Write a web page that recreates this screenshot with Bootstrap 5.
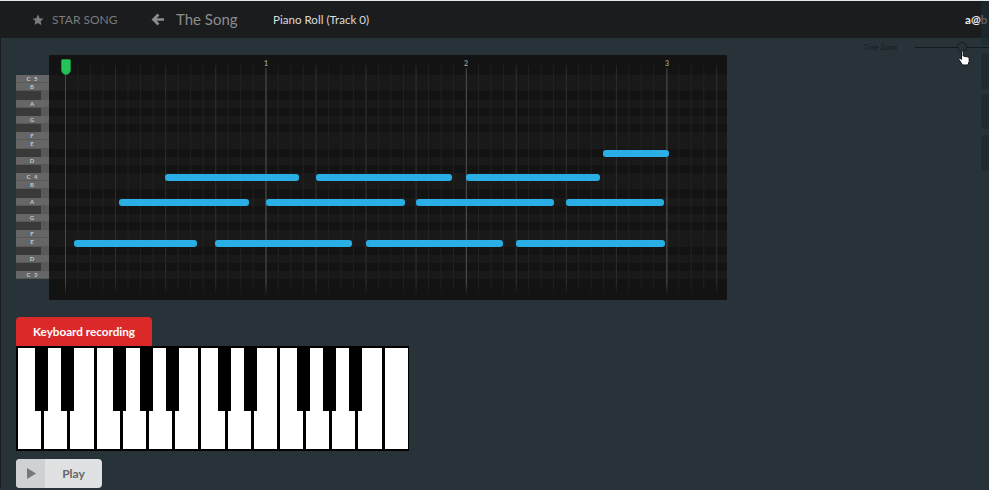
<!DOCTYPE html>
<html lang="en">
<head>
  <meta charset="UTF-8">
  <title>Piano Roll</title>
  <link href="https://cdn.jsdelivr.net/npm/bootstrap@5.3.0/dist/css/bootstrap.min.css" rel="stylesheet">
  <style>
    html, body { height: 100%; }
    body {
      background-color: #273339;
      font-family: Lato, "Open Sans", sans-serif;
      overflow: hidden;
      position: relative;
      border-top: 1px solid #e4e8e8;
    }
    .song-nav {
      background-color: #1b1c1d;
      height: 37px;
      padding: 0 0 0 32px;
      flex-wrap: nowrap;
      justify-content: flex-start;
    }
    .star-link { color: #7a7b7c; font-size: 12px; width: 119px; }
    .star-link svg { margin-right: 8px; }
    .song-link { color: #8c8d8e; font-size: 15px; width: 122px; }
    .song-link svg { margin-right: 12px; }
    .track-name { color: #dcdcdc; font-size: 11.6px; }
    .user-name { color: #e8e8e8; font-size: 11.6px; font-weight: 700; position: absolute; left: 965px; }
    .work-area { padding: 0 0 0 15px; border-left: 1px solid #1b1c1d; }
    .roll-row { height: 279px; }
    .key-col { width: 33px; padding-top: 37px; flex: none; }
    .key-row {
      height: 8.18px;
      background-color: #666;
      color: #c8c8c8;
      font-size: 6px;
      font-weight: 700;
      line-height: 8px;
      text-align: center;
      letter-spacing: 1px;
      position: relative;
      box-shadow: inset 0 -1px 0 #585858;
    }
    .key-row.is-black { background-color: #595959; box-shadow: none; }
    .key-row.is-black::before {
      content: "";
      position: absolute;
      left: 0; top: 0; bottom: 0;
      width: 25px;
      background-color: #393939;
    }
    .roll-box {
      width: 678px;
      height: 245px;
      margin-top: 17px;
      background-color: #131313;
      padding-top: 20px;
      position: relative;
      flex: none;
    }
    .grid-row { height: 8.18px; background-color: #191919; }
    .grid-row.is-black { background-color: #131313; }
    .grid-lines {
      position: absolute;
      left: 16px; right: 0; top: 5px; bottom: 4px;
      background-image:
        linear-gradient(90deg, #484848 1px, transparent 1px),
        linear-gradient(90deg, #2c2c2c 1px, transparent 1px),
        linear-gradient(90deg, #222 1px, transparent 1px);
      background-size: 200.5px 100%, 50.1px 100%, 12.53px 100%;
      -webkit-mask-image: linear-gradient(180deg, transparent, #000 12px, #000 calc(100% - 14px), transparent);
      mask-image: linear-gradient(180deg, transparent, #000 12px, #000 calc(100% - 14px), transparent);
      filter: blur(.4px);
    }
    .bar-num {
      position: absolute;
      top: 4px;
      width: 12px;
      margin-left: -5px;
      text-align: center;
      color: #999;
      font-size: 7px;
      font-weight: 700;
      line-height: 9px;
      background-color: #131313;
    }
    .roll-note {
      position: absolute;
      height: 7px;
      background-color: #2aaee6;
      border-radius: 3px;
    }
    .play-head {
      position: absolute;
      left: 12px; top: 4px;
      width: 10px; height: 16px;
      background-color: #24c45a;
      border: 1px solid #1a8f42;
      border-radius: 2px 2px 6px 6px;
    }
    .zoom-box { position: absolute; left: 864px; top: 38px; width: 125px; height: 17px; }
    .zoom-label { color: #151d20; font-size: 6.700px; width: 51px; flex: none; }
    .zoom-track { height: 1px; flex: 1; background-color: #14191c; position: relative; }
    .zoom-handle {
      position: absolute;
      left: 42px; top: -5px;
      width: 10px; height: 10px;
      border: 1px solid #14191c;
      border-radius: 50%;
      background-color: #273339;
    }
    .hand-cursor { position: absolute; left: 958px; top: 49px; }
    .side-tab {
      position: absolute;
      left: 981px;
      width: 12px;
      background-color: #1f2b30;
      border-radius: 4px;
    }
    .side-tab.is-faded { background-color: rgba(30, 43, 48, .72); }
    .record-btn {
      background-color: #db2828;
      color: #fff;
      font-size: 11.7px;
      font-weight: 700;
      width: 136px;
      height: 29px;
      padding: 0;
      border: 0;
      border-radius: 4px 4px 0 0;
      display: block;
    }
    .piano-box {
      width: 393px;
      height: 105px;
      background-color: #000;
      padding: 2px;
      gap: 3px;
      position: relative;
    }
    .white-key { width: 23.2px; background-color: #fff; flex: none; }
    .black-key {
      position: absolute;
      top: 0;
      width: 13px;
      height: 65px;
      background-color: #000;
    }
    .play-btn {
      margin-top: 8px;
      width: 86px;
      height: 29px;
      background-color: #e0e1e2;
      color: #666;
      font-size: 12px;
      font-weight: 700;
      border-radius: 4px;
      overflow: hidden;
    }
    .play-icon { width: 29px; background-color: #d0d1d2; }
  </style>
</head>
<body>
  <nav class="navbar song-nav">
    <span class="star-link d-flex align-items-center">
      <svg width="12" height="12" viewBox="0 0 24 24" fill="#7a7b7c"><path d="M12 1l3.4 7.3 7.6 1-5.6 5.400 1.400 7.900L12 18l-6.800 3.600 1.400-7.900L1 9.300l7.600-1z"/></svg>
      STAR SONG
    </span>
    <span class="song-link d-flex align-items-center">
      <svg width="13" height="13" viewBox="0 0 24 24" fill="#8c8d8e"><path d="M12 1l3.500 3.500-5 5H24v5H10.500l5 5L12 23 1 12z"/></svg>
      The Song
    </span>
    <span class="track-name">Piano Roll (Track 0)</span>
    <span class="user-name">a@b</span>
  </nav>

  <div class="zoom-box d-flex align-items-center">
    <span class="zoom-label">Time Zoom</span>
    <div class="zoom-track"><div class="zoom-handle"></div></div>
  </div>
  <svg class="hand-cursor" width="13" height="16" viewBox="0 0 13 16">
    <path d="M3.500 1.500c.8-.8 1.700-.3 1.700.7V6l4 .8c1.300.3 2 1 2 2.200v2.500L10 15H4.500L1 9.500c-.4-.9.500-1.500 1.300-1l1.200 1z" fill="#fff" stroke="#111" stroke-width="1"/>
  </svg>
  <div class="side-tab is-faded" style="top:0;height:44px"></div>
  <div class="side-tab" style="top:52px;height:36px"></div>
  <div class="side-tab" style="top:93px;height:35px"></div>
  <div class="side-tab" style="top:134px;height:36px"></div>

  <main class="work-area">
    <div class="roll-row d-flex align-items-start">
      <div class="key-col" id="keys"></div>
      <div class="roll-box" id="roll">
        <div class="grid-lines"></div>
        <div class="play-head"></div>
      </div>
    </div>

    <button class="btn record-btn" type="button">Keyboard recording</button>
    <div class="piano-box d-flex" id="piano"></div>

    <div class="play-btn d-flex">
      <span class="play-icon d-flex align-items-center justify-content-center">
        <svg width="10" height="11" viewBox="0 0 10 11" fill="#777"><path d="M1 0l9 5.500L1 11z"/></svg>
      </span>
      <span class="flex-fill d-flex align-items-center justify-content-center">Play</span>
    </div>
  </main>

  <script>
    // 25 rows from C5 down to C3, empty label = black key
    const labels = ['C 5','B','','A','','G','','F','E','','D','','C 4','B','','A','','G','','F','E','','D','','C 3'];
    const keys = document.getElementById('keys');
    const roll = document.getElementById('roll');
    const lines = roll.querySelector('.grid-lines');

    labels.forEach(function (name) {
      const k = document.createElement('div');
      k.className = 'key-row' + (name ? '' : ' is-black');
      k.textContent = name;
      keys.appendChild(k);
      const r = document.createElement('div');
      r.className = 'grid-row' + (name ? '' : ' is-black');
      roll.insertBefore(r, lines);
    });

    [[1, 216], [2, 416], [3, 617]].forEach(function (b) {
      const n = document.createElement('div');
      n.className = 'bar-num';
      n.textContent = b[0];
      n.style.left = b[1] + 'px';
      roll.appendChild(n);
    });

    // row, x start, x end in page pixels
    const notes = [
      [9, 603, 669],
      [12, 165, 299], [12, 316, 452], [12, 466, 600],
      [15, 119, 249], [15, 266, 405], [15, 416, 554], [15, 566, 664],
      [20, 74, 197], [20, 215, 352], [20, 366, 503], [20, 516, 665]
    ];
    notes.forEach(function (n) {
      const d = document.createElement('div');
      d.className = 'roll-note';
      d.style.top = (21 + n[0] * 8.18) + 'px';
      d.style.left = (n[1] - 49) + 'px';
      d.style.width = (n[2] - n[1]) + 'px';
      roll.appendChild(d);
    });

    const piano = document.getElementById('piano');
    for (let i = 0; i < 15; i++) {
      const w = document.createElement('div');
      w.className = 'white-key';
      piano.appendChild(w);
    }
    [18.5, 44.5, 97, 123.5, 149.5, 202, 228, 280.5, 306.5, 333].forEach(function (x) {
      const b = document.createElement('div');
      b.className = 'black-key';
      b.style.left = x + 'px';
      piano.appendChild(b);
    });
  </script>
  <script src="https://cdn.jsdelivr.net/npm/bootstrap@5.3.0/dist/js/bootstrap.bundle.min.js"></script>
</body>
</html>
